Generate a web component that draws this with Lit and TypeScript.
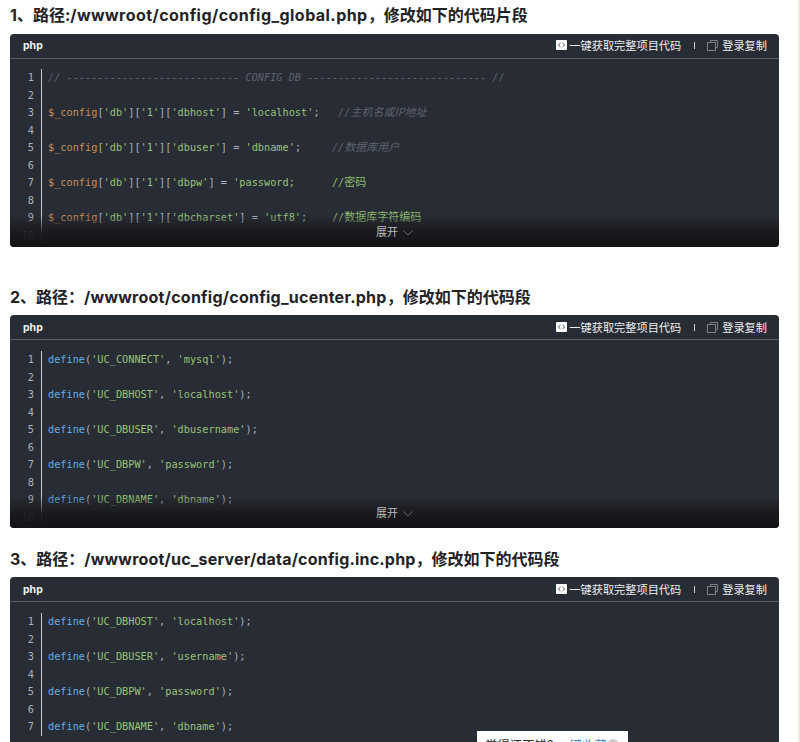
import { LitElement, html, css } from "lit";
import { customElement } from "lit/decorators.js";

type Tok = [string, string];
const cfg = (key: string, val: string, pad: string, comment: Tok[]): Tok[] => [
  ["v", "$_config"], ["p", "["], ["s", "'db'"], ["p", "]["], ["s", "'1'"], ["p", "]["], ["s", `'${key}'`], ["p", "] = "],
  ["s", val], ["p", ";" + pad], ...comment,
];
const def = (a: string, b: string): Tok[] => [
  ["f", "define"], ["p", "("], ["s", `'${a}'`], ["p", ", "], ["s", `'${b}'`], ["p", ");"],
];

const tail = "\uff0c修改如下的代码段";
const blocks = [
  {
    head: "1、路径:",
    path: "/wwwroot/config/config_global.php",
    tail: "\uff0c修改如下的代码片段",
    cls: "first",
    lines: [
      [["c", "// ---------------------------- CONFIG DB ----------------------------- //"]],
      cfg("dbhost", "'localhost'", "   ", [["c", "//"], ["c z", "主机名或IP地址"]]),
      cfg("dbuser", "'dbname'", "     ", [["c", "//"], ["c z", "数据库用户"]]),
      [["v", "$_config"], ["p", "["], ["s", "'db'"], ["p", "]["], ["s", "'1'"], ["p", "]["], ["s", "'dbpw'"], ["p", "] = "], ["s", "'password;"], ["p", "      "], ["g", "//"], ["g z", "密码"]],
      cfg("dbcharset", "'utf8'", "    ", [["g", "//"], ["g z", "数据库字符编码"]]),
    ] as Tok[][],
    max: 10,
  },
  {
    head: "2、路径\uff1a",
    path: "/wwwroot/config/config_ucenter.php",
    tail,
    cls: "second",
    lines: [
      def("UC_CONNECT", "mysql"), def("UC_DBHOST", "localhost"), def("UC_DBUSER", "dbusername"),
      def("UC_DBPW", "password"), def("UC_DBNAME", "dbname"),
    ],
    max: 10,
  },
  {
    head: "3、路径\uff1a",
    path: "/wwwroot/uc_server/data/config.inc.php",
    tail,
    cls: "third",
    lines: [
      def("UC_DBHOST", "localhost"), def("UC_DBUSER", "username"), def("UC_DBPW", "password"), def("UC_DBNAME", "dbname"),
    ],
    max: 7,
  },
];

@customElement("app-root")
export class AppRoot extends LitElement {
  static styles = css`
    :host { display: block; position: relative; width: 800px; height: 742px; overflow: hidden; background: #fff;
      font-family: "Inter", "Noto Sans CJK SC", sans-serif; }
    .shell { display: flex; height: 742px; }
    .page { flex: 1; min-width: 0; padding: 0 19px 0 10px; }
    .edge { flex: none; width: 2px; background: #e9eddb; }
    h2 { margin: 0; font-size: 16px; line-height: 18px; font-weight: 700; color: #222226; height: 18px; white-space: nowrap; }
    .path { letter-spacing: 0.45px; }
    .second .path { letter-spacing: 0.25px; }
    .third .path { letter-spacing: 0.2px; }
    .first { padding-top: 6px; }
    .first h2 { margin-bottom: 10px; }
    .second { padding-top: 41px; }
    .second h2, .third h2 { margin-bottom: 9px; }
    .third { padding-top: 22px; }
    .card { position: relative; height: 213px; border-radius: 4px; background: #282c34; overflow: hidden; display: flex; flex-direction: column; }
    .third .card { height: 300px; }
    .bar { flex: none; height: 25px; box-sizing: border-box; border-bottom: 1px solid #5b5e63; display: flex; align-items: center; padding: 0 12px 2px 13px;
      color: #f1f1f1; font-size: 10.5px; }
    .second .bar, .third .bar { padding-bottom: 0; }
    .lang { font-weight: 700; flex: 1; font-size: 10.5px; }
    .act { display: flex; align-items: center; gap: 2px; font-size: 11.2px; color: #eee; }
    .sep { width: 1px; height: 7px; background: #ccc; margin: 0 12px 0 13px; }
    .ico-a { width: 11px; height: 10px; display: block; }
    .ico-b { width: 11px; height: 11px; display: block; margin-right: 2px; }
    .code { flex: 1; display: flex; align-items: flex-start; padding-top: 10px; font-family: "DejaVu Sans Mono", "Noto Sans CJK SC", monospace; font-size: 10.25px; line-height: 17.55px; }
    .second .code, .third .code { padding-top: 11px; }
    .nums { flex: none; width: 24px; padding-right: 7px; text-align: right; color: #abb2bf; border-right: 1px solid #c5c8ce; }
    .rows { padding-left: 6px; white-space: pre; }
    .row { height: 35.1px; }
    .v { color: #c8915a; }
    .p { color: #abb2bf; }
    .s { color: #98c379; }
    .f { color: #61aeee; }
    .c { color: #5c6370; font-style: italic; }
    .g { color: #8fbb72; }
    .z { font-family: "Noto Sans CJK SC", sans-serif; font-size: 11px; line-height: 1; }
    .fade { position: absolute; left: 0; right: 0; bottom: 0; height: 32px; display: flex; justify-content: center; align-items: flex-end;
      gap: 5px; padding-bottom: 8px; box-sizing: border-box;
      background: linear-gradient(to bottom, rgba(24, 26, 30, 0), rgba(23, 24, 27, 0.9) 55%, #121315 100%); color: #bbb; font-size: 11px; line-height: 13px; }
    .chev { width: 10px; height: 6px; display: block; margin-bottom: 3px; }
    .pop { position: absolute; left: 477px; top: 731px; width: 151px; box-sizing: border-box; padding: 4px 9px 0 8px; background: #fff;
      display: flex; align-items: center; height: 24px; font-size: 12.4px; color: #333; white-space: nowrap; }
    .pop a { color: #3f86c6; margin-left: 4px; flex: 1; }
    .close { width: 13px; height: 13px; border-radius: 50%; background: #c9c9c9; }
  `;

  private renderBlock(b: (typeof blocks)[number]) {
    const nums = Array.from({ length: b.max }, (_, i) => i + 1);
    return html`<section class=${b.cls}>
      <h2>${b.head}<span class="path">${b.path}</span>${b.tail}</h2>
      <div class="card">
        <div class="bar">
          <span class="lang">php</span>
          <span class="act">
            <svg class="ico-a" viewBox="0 0 11 10"><rect width="11" height="10" rx="1" fill="#fff"/><path d="M4.500 3 2.300 5l2.200 2M6.500 3l2.200 2-2.200 2" fill="none" stroke="#555" stroke-width="1"/></svg>
            一键获取完整项目代码</span>
          <span class="sep"></span>
          <span class="act">
            <svg class="ico-b" viewBox="0 0 11 11" fill="none" stroke="#7d7f84"><path d="M3.500 2.500v-2h7v7h-2"/><rect x=".5" y="2.500" width="8" height="8"/></svg>
            登录复制</span>
        </div>
        <div class="code">
          <div class="nums">${nums.map((n) => html`<div>${n}</div>`)}</div>
          <div class="rows">${b.lines.map((l) => html`<div class="row">${l.map(([c, t]) => html`<span class=${c}>${t}</span>`)}</div>`)}</div>
        </div>
        ${b.cls === "third"
          ? ""
          : html`<div class="fade"><span>展开</span>
              <svg class="chev" viewBox="0 0 10 6" fill="none" stroke="#666a70"><path d="M.5.5 5 5 9.500.5"/></svg></div>`}
      </div>
    </section>`;
  }

  render() {
    return html`<div class="shell"><div class="page">${blocks.map((b) => this.renderBlock(b))}</div><div class="edge"></div></div>
      <div class="pop"><span>觉得还不错?</span><a>一键收藏</a><span class="close"></span></div>`;
  }
}
